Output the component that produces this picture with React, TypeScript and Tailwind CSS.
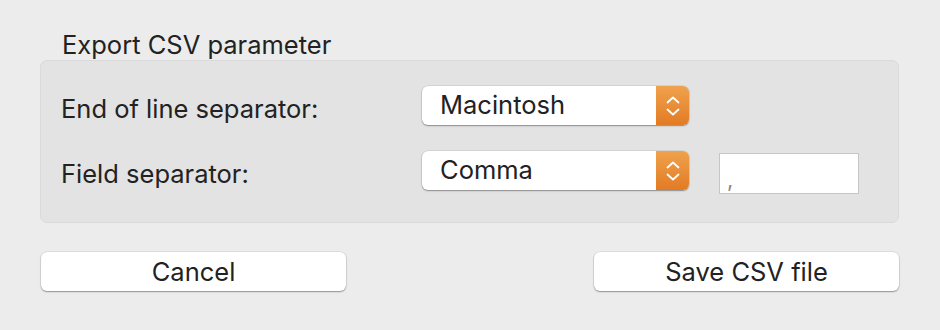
import React from "react";

const font = { fontFamily: "Inter, 'Helvetica Neue', Arial, sans-serif" };

const Chevrons: React.FC = () => (
  <svg width="14" height="26" viewBox="0 0 14 26" fill="none">
    <path d="M1.5 9.5 L7 4.5 L12.5 9.5" stroke="white" strokeWidth="1.8" strokeLinecap="round" strokeLinejoin="round" />
    <path d="M1.5 16.5 L7 21.5 L12.5 16.5" stroke="white" strokeWidth="1.8" strokeLinecap="round" strokeLinejoin="round" />
  </svg>
);

const PopUp: React.FC<{ value: string }> = ({ value }) => (
  <div className="flex h-[39px] w-[267px] items-stretch rounded-[6px] bg-white shadow-[0_0_0_0.5px_rgba(0,0,0,0.12),0_1px_1.5px_rgba(0,0,0,0.35)]">
    <div className="flex flex-1 items-center pl-[18px] text-[25.5px] text-[#222]">{value}</div>
    <div className="flex w-[33px] items-center justify-center rounded-r-[6px] bg-gradient-to-b from-[#efa24c] to-[#e27b22]">
      <Chevrons />
    </div>
  </div>
);

const Button: React.FC<{ label: string }> = ({ label }) => (
  <button className="flex h-[39px] w-[305px] items-center justify-center rounded-[6px] bg-white pt-[1px] text-[25.5px] text-[#222] shadow-[0_0_0_0.5px_rgba(0,0,0,0.12),0_1px_1.5px_rgba(0,0,0,0.35)]">
    {label}
  </button>
);

const App: React.FC = () => {
  return (
    <div className="h-[330px] w-[940px] bg-[#ececec]" style={font}>
      <div className="pl-[62px] pt-[32px] text-[25.5px] leading-[26px] text-[#222]">
        Export CSV parameter
      </div>
      <div className="ml-[40px] mt-[2px] h-[163px] w-[859px] rounded-[7px] border border-[#dadada] bg-[#e3e3e3] pl-[20px] pt-[25px]">
        <div className="flex h-[39px] items-start">
          <div className="mt-[3px] w-[361px] text-[25.5px] leading-[39px] text-[#222]">End of line separator:</div>
          <PopUp value="Macintosh" />
        </div>
        <div className="mt-[26px] flex h-[39px] items-start">
          <div className="mt-[3px] w-[361px] text-[25.5px] leading-[39px] text-[#222]">Field separator:</div>
          <PopUp value="Comma" />
          <div className="ml-[30px] mt-[2px] flex h-[41px] w-[140px] items-end border border-[#c6c6c6] bg-white pb-[2px] pl-[7px] text-[22px] leading-[24px] text-[#888]">
            ,
          </div>
        </div>
      </div>
      <div className="mt-[29px] flex w-[899px] justify-between pl-[41px]">
        <Button label="Cancel" />
        <Button label="Save CSV file" />
      </div>
    </div>
  );
};

export default App;
